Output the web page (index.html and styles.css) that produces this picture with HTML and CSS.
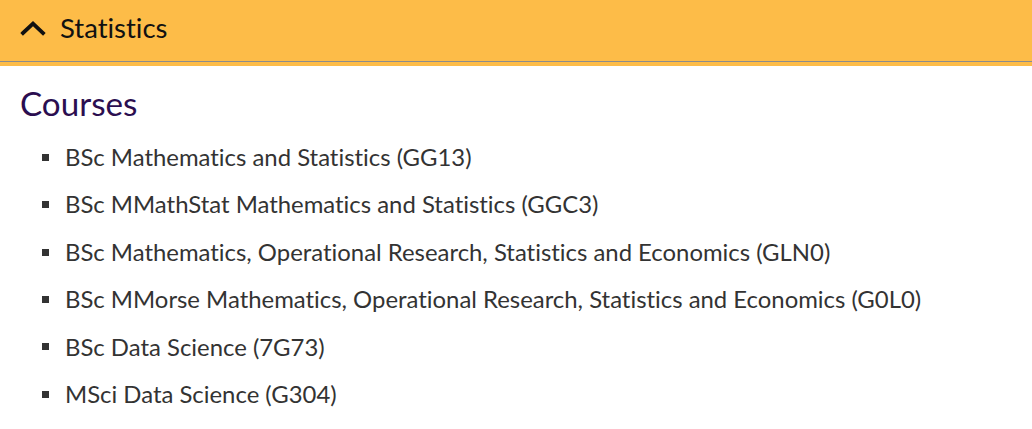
FILE: index.html
```html
<!DOCTYPE html>
<html lang="en">
<head>
<meta charset="utf-8">
<title>Statistics</title>
<link rel="stylesheet" href="styles.css">
</head>
<body>
<section class="panel">
  <div class="panel-heading">
    <div class="panel-title">
      <svg class="chev" width="26" height="16" viewBox="0 0 26 16" aria-hidden="true"><polyline points="3,13 13,3.5 23,13" fill="none" stroke="#111" stroke-width="3.8" stroke-linecap="square"/></svg>
      <span>Statistics</span>
    </div>
  </div>
  <div class="panel-body">
    <h2 class="heading">Courses</h2>
    <ul class="courses">
      <li>BSc Mathematics and Statistics (GG13)</li>
      <li>BSc MMathStat Mathematics and Statistics (GGC3)</li>
      <li>BSc Mathematics, Operational Research, Statistics and Economics (GLN0)</li>
      <li>BSc MMorse Mathematics, Operational Research, Statistics and Economics (G0L0)</li>
      <li>BSc Data Science (7G73)</li>
      <li>MSci Data Science (G304)</li>
    </ul>
  </div>
</section>
</body>
</html>
```
FILE: styles.css
```css
html, body {
  margin: 0;
  padding: 0;
  background: #fff;
  font-family: Lato, "Open Sans", sans-serif;
  font-variant-ligatures: none;
}
.panel-heading {
  background: #fdbc48;
  padding-bottom: 4px;
}
.panel-title {
  height: 62px;
  box-sizing: border-box;
  border-bottom: 1px solid #8c8c8c;
  display: flex;
  align-items: center;
  padding-left: 20px;
  padding-bottom: 6px;
  gap: 14px;
  font-size: 27.5px;
  color: #111;
}
.chev { display: block; margin-top: 1px; }
.panel-body {
  padding: 17px 20px 0 20px;
}
.heading {
  margin: 0;
  font-weight: 400;
  font-size: 33.2px;
  line-height: 40px;
  color: #2b0e50;
}
.courses {
  margin: 10px 0 0 0;
  padding: 0 0 0 22px;
  list-style: none;
  color: #333;
  font-size: 23.9px;
}
.courses li {
  line-height: 47.4px;
  display: flex;
  align-items: center;
  gap: 16px;
}
.courses li::before {
  content: "";
  width: 7px;
  height: 7px;
  background: #333;
  flex: none;
  margin-top: 1px;
}
```
